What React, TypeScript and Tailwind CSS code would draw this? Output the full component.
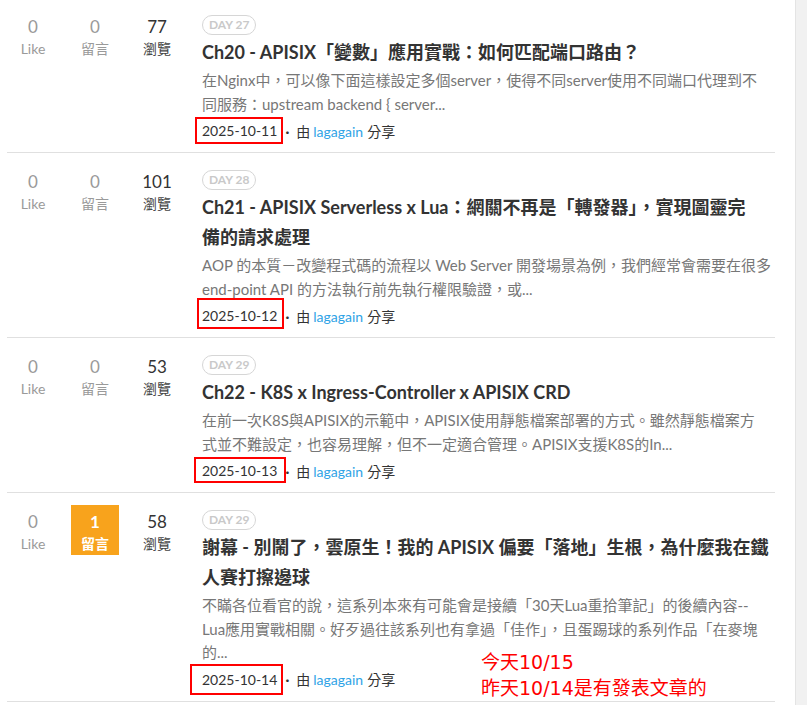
import React from "react";

type Stat = { likes: string; comments: string; views: string; hot?: boolean };
type Row = {
  stat: Stat;
  day: string;
  title: string[];
  desc: string[];
  date: string;
  boxCls: string;
};

const rows: Row[] = [
  {
    stat: { likes: "0", comments: "0", views: "77" },
    day: "DAY 27",
    title: ["Ch20 - APISIX「變數」應用實戰：如何匹配端口路由？"],
    desc: [
      "在Nginx中，可以像下面這樣設定多個server，使得不同server使用不同端口代理到不",
      "同服務：upstream backend { server...",
    ],
    date: "2025-10-11",
    boxCls: "top-[-1px] bottom-0 left-[-7px] right-[-6px]",
  },
  {
    stat: { likes: "0", comments: "0", views: "101" },
    day: "DAY 28",
    title: [
      "Ch21 - APISIX Serverless x Lua：網關不再是「轉發器」，實現圖靈完",
      "備的請求處理",
    ],
    desc: [
      "AOP 的本質－改變程式碼的流程以 Web Server 開發場景為例，我們經常會需要在很多",
      "end-point API 的方法執行前先執行權限驗證，或...",
    ],
    date: "2025-10-12",
    boxCls: "top-[-5px] bottom-0 left-[-5px] right-[-7px]",
  },
  {
    stat: { likes: "0", comments: "0", views: "53" },
    day: "DAY 29",
    title: ["Ch22 - K8S x Ingress-Controller x APISIX CRD"],
    desc: [
      "在前一次K8S與APISIX的示範中，APISIX使用靜態檔案部署的方式。雖然靜態檔案方",
      "式並不難設定，也容易理解，但不一定適合管理。APISIX支援K8S的In...",
    ],
    date: "2025-10-13",
    boxCls: "top-[-1px] bottom-[1px] left-[-8px] right-[-9px]",
  },
  {
    stat: { likes: "0", comments: "1", views: "58", hot: true },
    day: "DAY 29",
    title: [
      "謝幕 - 別鬧了，雲原生！我的 APISIX 偏要「落地」生根，為什麼我在鐵",
      "人賽打擦邊球",
    ],
    desc: [
      "不瞞各位看官的說，這系列本來有可能會是接續「30天Lua重拾筆記」的後續內容--",
      "Lua應用實戰相關。好歹過往該系列也有拿過「佳作」，且蛋踢球的系列作品「在麥塊",
      "的...",
    ],
    date: "2025-10-14",
    boxCls: "top-[-3px] bottom-[-2px] left-[-12px] right-[-6px]",
  },
];

function StatBox({ num, label, tone }: { num: string; label: string; tone: "muted" | "dark" | "hot" }) {
  const box =
    tone === "hot"
      ? "bg-[#f8a31c] text-white"
      : tone === "dark"
      ? "text-[#333]"
      : "text-[#9a9a9a]";
  return (
    <div className={`w-[48px] h-[50px] pt-[5px] flex flex-col items-center ${box}`}>
      <div className={`text-[17px] leading-[23px] ${tone === "hot" ? "font-bold" : ""}`}>{num}</div>
      <div
        className={`text-[14px] leading-[22px] ${
          tone === "hot" ? "font-bold" : tone === "dark" ? "text-[#444]" : ""
        }`}
      >
        {label}
      </div>
    </div>
  );
}

export default function App() {
  return (
    <div className="relative flex w-[807px] h-[705px] overflow-hidden bg-white font-['Lato','Noto_Sans_CJK_TC',sans-serif]">
      <div className="w-[795px] h-[705px] overflow-hidden pl-[7px]">
        <div className="w-[768px] -mt-[2px]">
          {rows.map((r, i) => (
            <div key={i} className="flex border-b border-[#e0e0e0]">
              <div className="flex gap-[14px] pl-[2px] pt-[12px] shrink-0">
                <StatBox num={r.stat.likes} label="Like" tone="muted" />
                <StatBox num={r.stat.comments} label="留言" tone={r.stat.hot ? "hot" : "muted"} />
                <StatBox num={r.stat.views} label="瀏覽" tone="dark" />
              </div>
              <div className="ml-[21px] w-[568px] pt-[17px] pb-[8px]">
                <div className="flex w-fit items-center h-[20px] px-[6px] rounded-full border border-[#d6d6d6] text-[#c9c9c9] text-[12px] font-bold leading-none">
                  {r.day}
                </div>
                <div className="mt-[2px] text-[18px] leading-[30px] font-bold text-[#333] whitespace-nowrap">
                  {r.title.map((t, k) => (
                    <div key={k}>{t}</div>
                  ))}
                </div>
                <div className="mt-[2px] text-[15px] leading-[23.5px] text-[#777] whitespace-nowrap">
                  {r.desc.map((t, k) => (
                    <div key={k}>{t}</div>
                  ))}
                </div>
                <div className="mt-[2px] h-[26px] flex items-center text-[14px] text-[#333] whitespace-nowrap">
                  <span className="relative inline-block leading-[26px]">
                    {r.date}
                    <span className={`absolute border-2 border-[#f00] ${r.boxCls}`} />
                  </span>
                  <span className="ml-[8px] mr-[7px] font-bold">·</span>
                  <span>由</span>
                  <span className="ml-[3px] text-[#2fa3e6]">lagagain</span>
                  <span className="ml-[4px]">分享</span>
                </div>
              </div>
            </div>
          ))}
        </div>
      </div>
      <div className="w-[12px] h-[705px] bg-[#f1f1f1] border-l border-[#e4e4e4]" />
      <div className="absolute left-[481px] top-[649px] text-[19px] leading-[26px] text-[#f00] font-['DejaVu_Sans','Noto_Sans_CJK_TC',sans-serif] whitespace-nowrap">
        <div>今天10/15</div>
        <div>昨天10/14是有發表文章的</div>
      </div>
    </div>
  );
}
